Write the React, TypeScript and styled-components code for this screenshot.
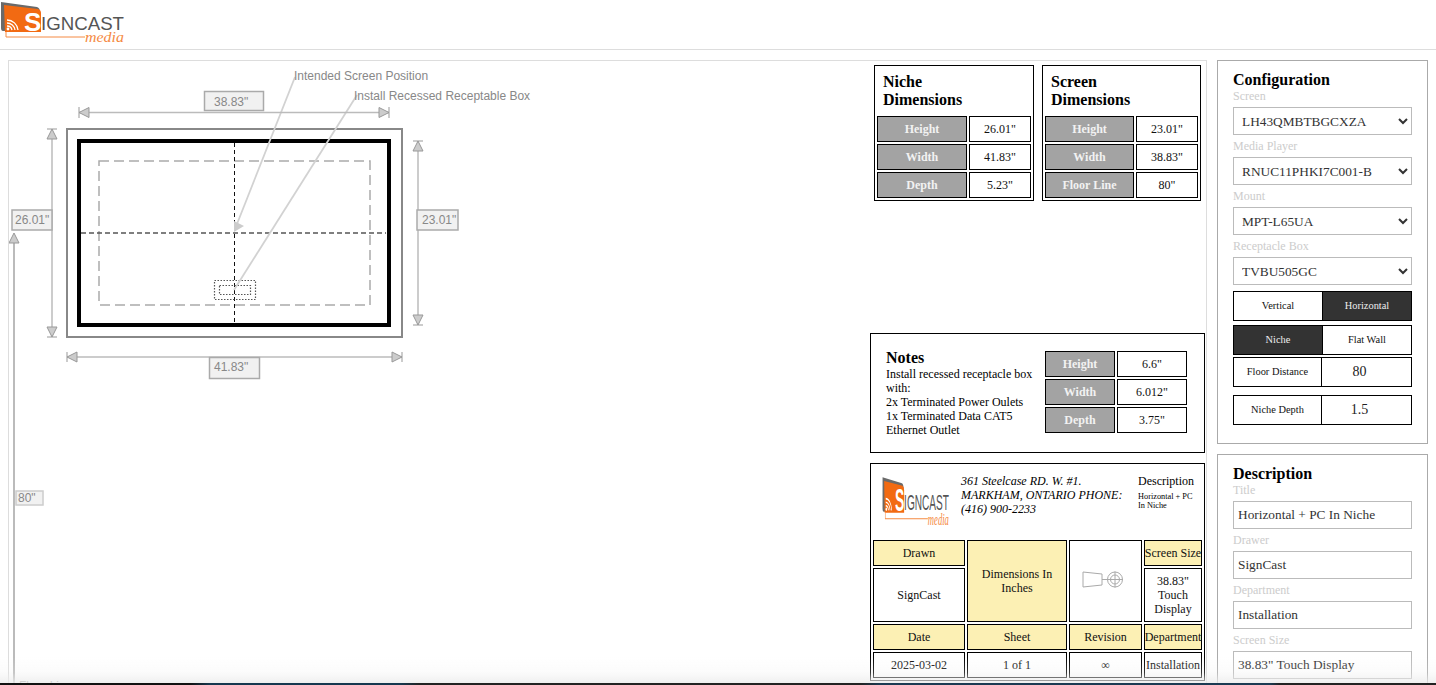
import React from 'react';
import styled, { createGlobalStyle } from 'styled-components';

const GlobalStyle = createGlobalStyle`
  html, body {
    margin: 0;
    height: 100%;
    overflow: hidden;
    background: #fff;
    font-family: "Liberation Serif", "Times New Roman", serif;
    color: #000;
  }
  * { box-sizing: border-box; }
`;

const Header = styled.header`
  height: 50px;
  border-bottom: 1px solid #ddd;
`;

const Main = styled.main`
  display: flex;
  align-items: flex-start;
  gap: 10px;
  padding: 10px 8px 0;
`;

const DrawingPanel = styled.section`
  display: flex;
  width: 1199px;
  border: 1px solid #ddd;
`;

const Canvas = styled.svg`
  display: block;
  flex: none;
  width: 861px;
  height: 640px;
`;

const SideColumn = styled.div`
  display: flex;
  flex-direction: column;
  width: 335px;
  padding-top: 4px;
`;

const DimensionRow = styled.div`
  display: flex;
  gap: 8px;
  margin: 0 0 132px 4px;
`;

const DimensionCard = styled.div<{ $labelWidth: number }>`
  width: ${p => p.$labelWidth + 70}px;
  height: 136px;
  border: 1px solid #000;
  padding: 7px 2px 2px;

  h3 {
    margin: 0 0 7px 6px;
    font-size: 16px;
    line-height: 18px;
  }
`;

const CellGrid = styled.div<{ $labelWidth: number; $valueWidth: number }>`
  display: grid;
  grid-template-columns: ${p => p.$labelWidth}px ${p => p.$valueWidth}px;
  grid-auto-rows: 26px;
  gap: 2px;
`;

const Cell = styled.div<{ $tone?: 'label' | 'yellow' | 'plain'; $rows?: number; $nowrap?: boolean }>`
  display: flex;
  align-items: center;
  justify-content: center;
  text-align: center;
  border: 1px solid #000;
  font-size: 12px;
  line-height: 14px;
  white-space: ${p => (p.$nowrap ? 'nowrap' : 'normal')};
  grid-row: ${p => (p.$rows ? `span ${p.$rows}` : 'auto')};
  font-weight: ${p => (p.$tone === 'label' ? 700 : 400)};
  color: ${p => (p.$tone === 'label' ? '#f2f2f2' : '#111')};
  background: ${p =>
    p.$tone === 'label' ? '#a3a3a3' : p.$tone === 'yellow' ? '#fcf0b4' : '#fff'};
`;

const NotesCard = styled.div`
  display: flex;
  align-items: flex-start;
  height: 120px;
  border: 1px solid #000;
  padding: 15px 0 0 15px;
`;

const NotesText = styled.div`
  width: 159px;
  padding-right: 8px;
  font-size: 12px;
  line-height: 14px;

  h3 {
    margin: 0;
    font-size: 16px;
    line-height: 18px;
  }
`;

const NotesTable = styled(CellGrid)`
  margin-top: 2px;
`;

const TitleBlock = styled.div`
  height: 218px;
  margin-top: 10px;
  border: 1px solid #000;
  padding: 0 2px;
`;

const TitleTop = styled.div`
  display: flex;
  height: 76px;
`;

const TitleLogo = styled.div`
  flex: none;
  width: 88px;
  padding: 11px 0 0 9px;
`;

const Address = styled.div`
  flex: none;
  width: 177px;
  padding: 10px 12px 0 0;
  font-size: 12px;
  line-height: 14px;
  font-style: italic;
`;

const TitleDescription = styled.div`
  padding-top: 10px;
  font-size: 12px;
  line-height: 14px;

  small {
    display: block;
    width: 56px;
    margin-top: 4px;
    font-size: 8.3px;
    line-height: 9px;
  }
`;

const SheetGrid = styled.div`
  display: grid;
  grid-template-columns: 92px 100px 73px 58px;
  grid-template-rows: 26px 54px 26px 26px;
  gap: 2px;
`;

const Sidebar = styled.aside`
  display: flex;
  flex-direction: column;
  gap: 10px;
  width: 211px;
`;

const FormPanel = styled.section`
  border: 1px solid #aaa;
  padding: 10px 15px 18px;
`;

const PanelTitle = styled.h2`
  margin: 0;
  font-size: 16px;
  line-height: 18px;
`;

const Field = styled.label`
  display: block;
  margin-bottom: 4px;
  font-size: 12px;
  line-height: 14px;
  color: #ccc;

  select,
  input {
    display: block;
    width: 179px;
    height: 28px;
    margin-top: 4px;
    border: 1px solid #bbb;
    border-radius: 0;
    background: #fff;
    color: #333;
    font-family: inherit;
    font-size: 13.33px;
    outline: none;
  }

  select {
    padding-left: 4px;
  }

  input {
    padding: 0 0 0 4px;
  }
`;

const ToggleRow = styled.div<{ $gap: number }>`
  display: flex;
  width: 179px;
  height: 30px;
  margin-top: ${p => p.$gap}px;
`;

const Toggle = styled.div<{ $active?: boolean; $first?: boolean }>`
  display: flex;
  flex: 1 1 0;
  min-width: 0;
  align-items: center;
  justify-content: center;
  padding-bottom: 2px;
  border: 1px solid #000;
  border-left-width: ${p => (p.$first ? 1 : 0)}px;
  font-size: 10.4px;
  color: ${p => (p.$active ? '#eee' : '#111')};
  background: ${p => (p.$active ? '#333' : '#fff')};
`;

const NumberInput = styled.input`
  flex: 0 0 90px;
  min-width: 0;
  border: 1px solid #000;
  border-left-width: 0;
  border-radius: 0;
  padding: 0 14px 0 0;
  outline: none;
  background: #fff;
  text-align: center;
  font-family: inherit;
  font-size: 14px;
  color: #222;
`;

const BottomFade = styled.div`
  position: fixed;
  left: 0;
  right: 0;
  bottom: 2px;
  height: 26px;
  background: linear-gradient(
    rgba(236, 236, 236, 0),
    rgba(236, 236, 236, 0.22) 60%,
    rgba(236, 236, 236, 0.8)
  );
  pointer-events: none;
`;

const TaskStrip = styled.div`
  position: fixed;
  left: 0;
  right: 0;
  bottom: 0;
  height: 2px;
  background: linear-gradient(
    90deg,
    #111 0 190px,
    #16384f 210px 400px,
    #222 420px 860px,
    #1b3a52 880px 1270px,
    #222 1280px
  );
`;

const DimText = styled.text`
  font-family: "Liberation Sans", Arial, sans-serif;
  font-size: 12px;
  fill: #888;
`;

const HeaderLogo = styled.div`
  width: 126px;
  height: 44px;
`;

const SymbolSvg = styled.svg`
  margin: 0 5px 2px 0;
`;

// orange card + wordmark, stretched for the small copy in the title block
const Logo: React.FC<{ width: number; height: number }> = ({ width, height }) => (
  <svg width={width} height={height} viewBox="0 0 126 44" preserveAspectRatio="none">
    <path d="M1 2 L37 7 Q40 8 40 12 L40 30 L3 31 Q1 31 1 28 Z" fill="#6a6a6a" />
    <path d="M4 5 L38 9 Q41 10 41 13 L41 32 L5 32 Z" fill="#f26a12" />
    <g fill="none" stroke="#fff" strokeWidth="1.3">
      <path d="M7 20 A11 11 0 0 1 18 30" />
      <path d="M7 23 A8 8 0 0 1 15 30" />
      <path d="M7 26 A5 5 0 0 1 12 30" />
    </g>
    <circle cx="8" cy="29" r="1.4" fill="#fff" />
    <text x="24" y="30.5" fontFamily="Liberation Sans, Arial, sans-serif" fontSize="26" fontWeight="700" fill="#fff">
      S
    </text>
    <text x="41" y="30" textLength="83" lengthAdjust="spacingAndGlyphs" fontFamily="Liberation Sans, Arial, sans-serif" fontSize="18" fill="#555">
      IGNCAST
    </text>
    <path d="M6 32 V37 H85" fill="none" stroke="#f58a43" strokeWidth="1" />
    <text x="85" y="42" textLength="39" lengthAdjust="spacingAndGlyphs" fontFamily="Liberation Serif, serif" fontStyle="italic" fontSize="14" fill="#f58a43">
      media
    </text>
  </svg>
);

const DimLabel: React.FC<{ x: number; y: number; w: number; h: number; tx: number; ty: number; text: string; stroke?: string }> = ({
  x, y, w, h, tx, ty, text, stroke = '#aaa',
}) => (
  <g>
    <rect x={x} y={y} width={w} height={h} fill="#f1f1f1" stroke={stroke} strokeWidth="1.5" />
    <DimText x={tx} y={ty}>{text}</DimText>
  </g>
);

const Arrow: React.FC<{ points: string }> = ({ points }) => (
  <polygon points={points} fill="#ccc" stroke="#999" strokeWidth="1" />
);

const Drawing = () => (
  <Canvas viewBox="9 61 861 640">
    {/* niche and screen outlines */}
    <rect x="67" y="129" width="335" height="208" fill="none" stroke="#888" strokeWidth="2" />
    <rect x="79" y="141" width="310" height="184" fill="none" stroke="#000" strokeWidth="4" />
    <rect x="99" y="161" width="271" height="144" fill="none" stroke="#aaa" strokeWidth="1.5" strokeDasharray="10 5" />
    <line x1="234.5" y1="143" x2="234.5" y2="323" stroke="#111" strokeWidth="1" strokeDasharray="4 3" />
    <line x1="81" y1="233" x2="386" y2="233" stroke="#555" strokeWidth="1.5" strokeDasharray="5 3" />
    <rect x="214.5" y="280.5" width="41" height="19" fill="none" stroke="#555" strokeWidth="1.2" strokeDasharray="1.5 1.5" />
    <rect x="219.5" y="285.5" width="31" height="9" fill="none" stroke="#555" strokeWidth="1.2" strokeDasharray="1.5 1.5" />

    {/* leaders */}
    <line x1="295" y1="77" x2="237" y2="224" stroke="#d2d2d2" strokeWidth="1.8" />
    <polygon points="234,232 234,221 244,226" fill="#ccc" />
    <line x1="357" y1="95" x2="234" y2="290" stroke="#d2d2d2" strokeWidth="1.8" />
    <DimText x="294" y="80">Intended Screen Position</DimText>
    <DimText x="354" y="100">Install Recessed Receptable Box</DimText>

    {/* top dimension */}
    <line x1="79" y1="112.5" x2="389" y2="112.5" stroke="#bbb" strokeWidth="1.5" />
    <line x1="79" y1="107" x2="79" y2="118" stroke="#999" />
    <line x1="389" y1="107" x2="389" y2="118" stroke="#999" />
    <Arrow points="79,112.5 89,107.5 89,117.5" />
    <Arrow points="389,112.5 379,107.5 379,117.5" />
    <DimLabel x={204.5} y={91.5} w={59} h={19} tx={214} ty={106} text={'38.83"'} />

    {/* left dimension */}
    <line x1="52" y1="129" x2="52" y2="337" stroke="#bbb" strokeWidth="1.5" />
    <line x1="47" y1="129" x2="57" y2="129" stroke="#999" />
    <line x1="47" y1="337" x2="57" y2="337" stroke="#999" />
    <Arrow points="52,129 47,139 57,139" />
    <Arrow points="52,337 47,327 57,327" />
    <DimLabel x={12} y={210} w={40} h={20} tx={15} ty={224} text={'26.01"'} />

    {/* right dimension */}
    <line x1="418" y1="141" x2="418" y2="325" stroke="#bbb" strokeWidth="1.5" />
    <line x1="413" y1="141" x2="423" y2="141" stroke="#999" />
    <line x1="413" y1="325" x2="423" y2="325" stroke="#999" />
    <Arrow points="418,141 413,151 423,151" />
    <Arrow points="418,325 413,315 423,315" />
    <DimLabel x={417} y={210} w={41} h={20} tx={422} ty={224} text={'23.01"'} />

    {/* bottom dimension */}
    <line x1="67" y1="357" x2="402" y2="357" stroke="#bbb" strokeWidth="1.5" />
    <line x1="67" y1="352" x2="67" y2="362" stroke="#999" />
    <line x1="402" y1="352" x2="402" y2="362" stroke="#999" />
    <Arrow points="67,357 77,352 77,362" />
    <Arrow points="402,357 392,352 392,362" />
    <DimLabel x={209.5} y={357.5} w={50} h={21} tx={214} ty={371} text={'41.83"'} />

    {/* floor line */}
    <line x1="14" y1="236" x2="14" y2="700" stroke="#bbb" strokeWidth="2" />
    <Arrow points="14,233 9,243 19,243" />
    <DimLabel x={16} y={491} w={27} h={14} tx={18} ty={502} text={'80"'} stroke="#ccc" />
    <DimText x="19" y="690">Floor Line</DimText>
  </Canvas>
);

const ProjectionSymbol = () => (
  <SymbolSvg width="42" height="20" viewBox="0 0 42 20" fill="none" stroke="#aaa" strokeWidth="1">
    <path d="M1 2 L20 4 V15 L1 17 Z" />
    <path d="M20 9.5 H25" />
    <circle cx="33" cy="9.5" r="7.5" />
    <circle cx="33" cy="9.5" r="4.5" />
    <path d="M25 9.5 H41 M33 1.5 V17.5" />
  </SymbolSvg>
);

const niche = [
  ['Height', '26.01"'],
  ['Width', '41.83"'],
  ['Depth', '5.23"'],
];
const screen = [
  ['Height', '23.01"'],
  ['Width', '38.83"'],
  ['Floor Line', '80"'],
];
const box = [
  ['Height', '6.6"'],
  ['Width', '6.012"'],
  ['Depth', '3.75"'],
];
const configFields = [
  ['Screen', 'LH43QMBTBGCXZA'],
  ['Media Player', 'RNUC11PHKI7C001-B'],
  ['Mount', 'MPT-L65UA'],
  ['Receptacle Box', 'TVBU505GC'],
];
const descriptionFields = [
  ['Title', 'Horizontal + PC In Niche'],
  ['Drawer', 'SignCast'],
  ['Department', 'Installation'],
  ['Screen Size', '38.83" Touch Display'],
];

const Rows: React.FC<{ rows: string[][] }> = ({ rows }) => (
  <>
    {rows.map(([label, value]) => (
      <React.Fragment key={label}>
        <Cell $tone="label">{label}</Cell>
        <Cell>{value}</Cell>
      </React.Fragment>
    ))}
  </>
);

const App = () => (
  <>
    <GlobalStyle />
    <Header>
      <HeaderLogo>
        <Logo width={126} height={44} />
      </HeaderLogo>
    </Header>
    <Main>
      <DrawingPanel>
        <Drawing />
        <SideColumn>
          <DimensionRow>
            <DimensionCard $labelWidth={90}>
              <h3>Niche<br />Dimensions</h3>
              <CellGrid $labelWidth={90} $valueWidth={62}>
                <Rows rows={niche} />
              </CellGrid>
            </DimensionCard>
            <DimensionCard $labelWidth={89}>
              <h3>Screen<br />Dimensions</h3>
              <CellGrid $labelWidth={89} $valueWidth={62}>
                <Rows rows={screen} />
              </CellGrid>
            </DimensionCard>
          </DimensionRow>

          <NotesCard>
            <NotesText>
              <h3>Notes</h3>
              Install recessed receptacle box with:
              <br />2x Terminated Power Oulets
              <br />1x Terminated Data CAT5 Ethernet Outlet
            </NotesText>
            <NotesTable $labelWidth={70} $valueWidth={70}>
              <Rows rows={box} />
            </NotesTable>
          </NotesCard>

          <TitleBlock>
            <TitleTop>
              <TitleLogo>
                <Logo width={68} height={52} />
              </TitleLogo>
              <Address>361 Steelcase RD. W. #1. MARKHAM, ONTARIO PHONE: (416) 900-2233</Address>
              <TitleDescription>
                Description
                <small>Horizontal + PC In Niche</small>
              </TitleDescription>
            </TitleTop>
            <SheetGrid>
              <Cell $tone="yellow">Drawn</Cell>
              <Cell $tone="yellow" $rows={2}>Dimensions In Inches</Cell>
              <Cell $rows={2}><ProjectionSymbol /></Cell>
              <Cell $tone="yellow" $nowrap>Screen Size</Cell>
              <Cell>SignCast</Cell>
              <Cell>38.83" Touch Display</Cell>
              <Cell $tone="yellow">Date</Cell>
              <Cell $tone="yellow">Sheet</Cell>
              <Cell $tone="yellow">Revision</Cell>
              <Cell $tone="yellow" $nowrap>Department</Cell>
              <Cell>2025-03-02</Cell>
              <Cell>1 of 1</Cell>
              <Cell>∞</Cell>
              <Cell $nowrap>Installation</Cell>
            </SheetGrid>
          </TitleBlock>
        </SideColumn>
      </DrawingPanel>

      <Sidebar>
        <FormPanel>
          <PanelTitle>Configuration</PanelTitle>
          {configFields.map(([label, value]) => (
            <Field key={label}>
              {label}
              <select defaultValue={value}>
                <option>{value}</option>
              </select>
            </Field>
          ))}
          <ToggleRow $gap={6}>
            <Toggle $first>Vertical</Toggle>
            <Toggle $active>Horizontal</Toggle>
          </ToggleRow>
          <ToggleRow $gap={4}>
            <Toggle $first $active>Niche</Toggle>
            <Toggle>Flat Wall</Toggle>
          </ToggleRow>
          <ToggleRow $gap={2}>
            <Toggle $first>Floor Distance</Toggle>
            <NumberInput defaultValue="80" readOnly />
          </ToggleRow>
          <ToggleRow $gap={8}>
            <Toggle $first>Niche Depth</Toggle>
            <NumberInput defaultValue="1.5" readOnly />
          </ToggleRow>
        </FormPanel>

        <FormPanel>
          <PanelTitle>Description</PanelTitle>
          {descriptionFields.map(([label, value]) => (
            <Field key={label}>
              {label}
              <input defaultValue={value} readOnly />
            </Field>
          ))}
        </FormPanel>
      </Sidebar>
    </Main>
    <BottomFade />
    <TaskStrip />
  </>
);

export default App;
